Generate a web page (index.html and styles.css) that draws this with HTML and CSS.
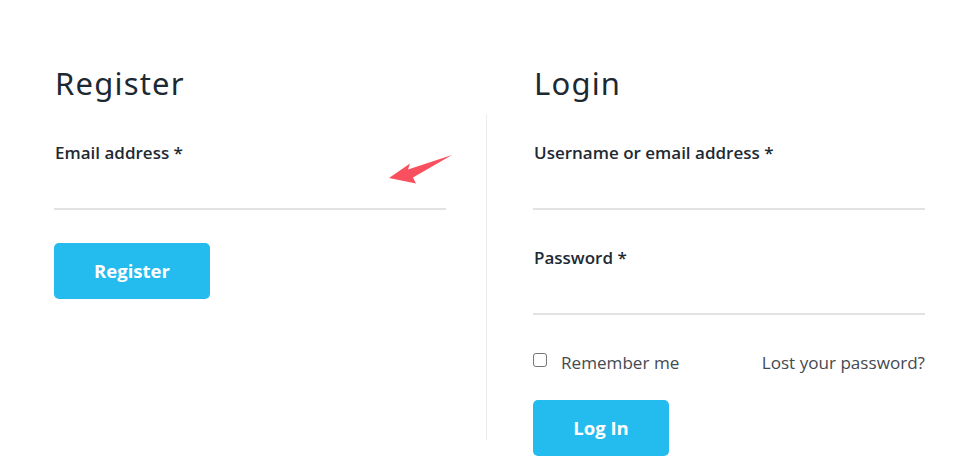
FILE: index.html
```html
<!DOCTYPE html>
<html lang="en">
<head>
<meta charset="utf-8">
<title>My account</title>
<link rel="stylesheet" href="styles.css">
</head>
<body>
<div class="page">
  <section class="col col-register">
    <h2 class="title">Register</h2>
    <div class="field">
      <label class="label">Email address <span class="req">*</span></label>
      <div class="input"></div>
      <svg class="arrow" width="72" height="32" viewBox="0 0 72 32">
        <path d="M69 0 L25 14.5 L27 8.5 L6 23 L33 28.5 L30 22.5 Z" fill="#f9505f"/>
      </svg>
    </div>
    <button class="btn btn-register">Register</button>
  </section>
  <section class="col col-login">
    <h2 class="title">Login</h2>
    <div class="field">
      <label class="label">Username or email address <span class="req">*</span></label>
      <div class="input"></div>
    </div>
    <div class="field">
      <label class="label">Password <span class="req">*</span></label>
      <div class="input"></div>
    </div>
    <div class="row">
      <label class="remember"><span class="check"></span>Remember me</label>
      <a class="lost">Lost your password?</a>
    </div>
    <button class="btn btn-login">Log In</button>
  </section>
</div>
</body>
</html>
```
FILE: styles.css
```css
* { box-sizing: border-box; }
html, body { margin: 0; padding: 0; background: #fff; }
body { font-family: "Open Sans", "Liberation Sans", sans-serif; color: #1e2a33; }
.page {
  display: flex;
  padding: 63px 0 0 54px;
}
.col { display: flex; flex-direction: column; }
.col-register { width: 392px; margin-right: 40px; }
.col-login {
  width: 439px;
  padding-left: 47px;
  position: relative;
}
.col-login::before {
  content: "";
  position: absolute;
  left: 0;
  top: 51px;
  height: 326px;
  border-left: 1px solid #ececec;
}
.title {
  margin: 0 0 0 1px;
  font-family: "Noto Sans", "Open Sans", sans-serif;
  font-weight: 400;
  font-size: 31px;
  line-height: 40px;
  letter-spacing: 1.2px;
  color: #1c2933;
}
.field { position: relative; margin-top: 38px; }
.col-login .field + .field { margin-top: 36px; }
.label {
  display: block;
  margin-left: 1px;
  font-weight: 600;
  font-size: 17px;
  line-height: 24px;
  color: #1e2a33;
}
.input {
  height: 31px;
  margin-top: 14px;
  border-bottom: 2px solid #e2e2e2;
}
.arrow { position: absolute; left: 329px; top: 14px; }
.btn {
  border: 0;
  border-radius: 5px;
  background: #24bbef;
  color: #fff;
  font-family: "Open Sans", sans-serif;
  font-weight: 700;
  font-size: 18.5px;
  height: 56px;
  padding: 0 0 2px;
  cursor: pointer;
}
.btn-register { width: 156px; margin-top: 33px; }
.btn-login { width: 136px; margin-top: 19px; }
.row {
  display: flex;
  justify-content: space-between;
  align-items: center;
  margin-top: 28px;
  height: 38px;
  font-size: 17.1px;
  color: #444a50;
}
.remember { display: flex; align-items: center; }
.check {
  width: 14px; height: 14px;
  border: 1px solid #767676;
  border-radius: 3px;
  margin-right: 14px;
  margin-top: -4px;
}
.lost { color: #444a50; }
```
